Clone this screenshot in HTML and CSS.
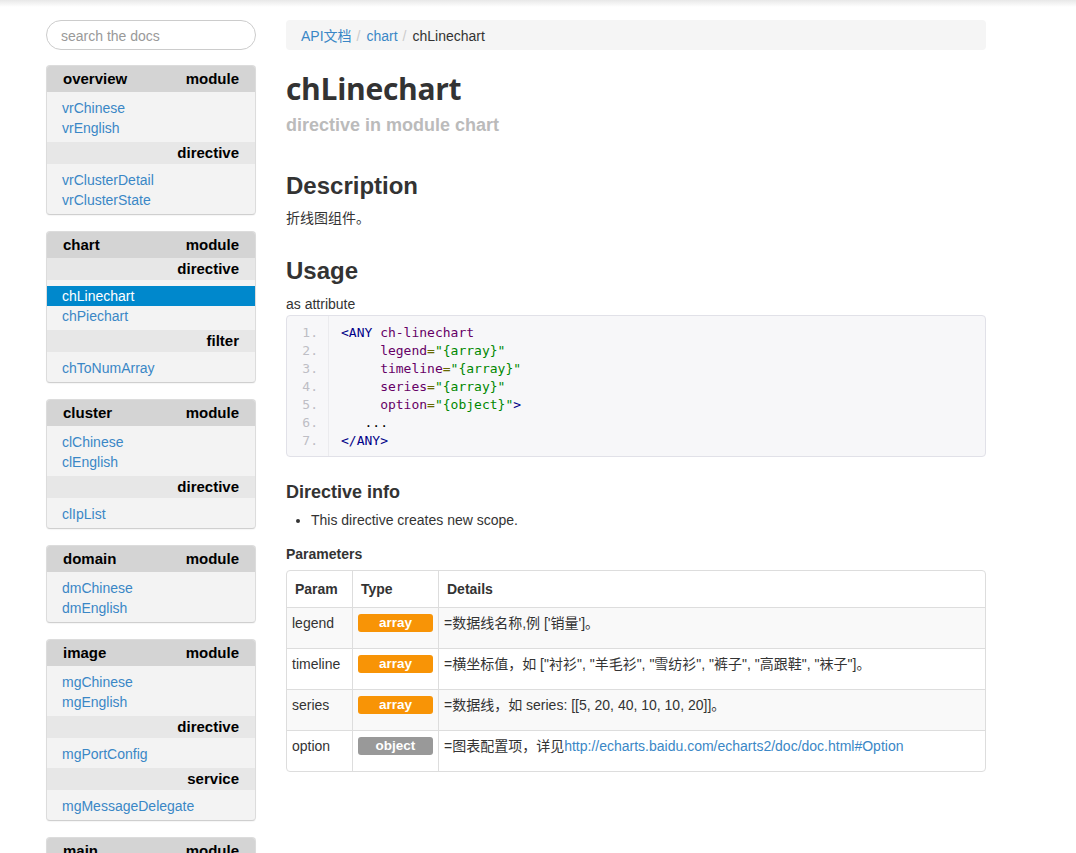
FILE: index.html
```html
<!DOCTYPE html>
<html lang="zh">
<head>
<meta charset="utf-8">
<title>chLinechart</title>
<link rel="stylesheet" href="styles.css">
</head>
<body>
<div class="page">
  <aside class="sidebar">
    <input class="search" type="text" placeholder="search the docs">

    <div class="navbox">
      <div class="nav-head"><span>overview</span><span>module</span></div>
      <ul class="nav-list">
        <li><a href="#">vrChinese</a></li>
        <li><a href="#">vrEnglish</a></li>
      </ul>
      <div class="nav-sub">directive</div>
      <ul class="nav-list">
        <li><a href="#">vrClusterDetail</a></li>
        <li><a href="#">vrClusterState</a></li>
      </ul>
    </div>

    <div class="navbox">
      <div class="nav-head"><span>chart</span><span>module</span></div>
      <div class="nav-sub">directive</div>
      <ul class="nav-list">
        <li><a href="#" class="active">chLinechart</a></li>
        <li><a href="#">chPiechart</a></li>
      </ul>
      <div class="nav-sub">filter</div>
      <ul class="nav-list">
        <li><a href="#">chToNumArray</a></li>
      </ul>
    </div>

    <div class="navbox">
      <div class="nav-head"><span>cluster</span><span>module</span></div>
      <ul class="nav-list">
        <li><a href="#">clChinese</a></li>
        <li><a href="#">clEnglish</a></li>
      </ul>
      <div class="nav-sub">directive</div>
      <ul class="nav-list">
        <li><a href="#">clIpList</a></li>
      </ul>
    </div>

    <div class="navbox">
      <div class="nav-head"><span>domain</span><span>module</span></div>
      <ul class="nav-list">
        <li><a href="#">dmChinese</a></li>
        <li><a href="#">dmEnglish</a></li>
      </ul>
    </div>

    <div class="navbox">
      <div class="nav-head"><span>image</span><span>module</span></div>
      <ul class="nav-list">
        <li><a href="#">mgChinese</a></li>
        <li><a href="#">mgEnglish</a></li>
      </ul>
      <div class="nav-sub">directive</div>
      <ul class="nav-list">
        <li><a href="#">mgPortConfig</a></li>
      </ul>
      <div class="nav-sub">service</div>
      <ul class="nav-list">
        <li><a href="#">mgMessageDelegate</a></li>
      </ul>
    </div>

    <div class="navbox">
      <div class="nav-head"><span>main</span><span>module</span></div>
      <ul class="nav-list">
        <li><a href="#">mnChinese</a></li>
        <li><a href="#">mnEnglish</a></li>
      </ul>
    </div>
  </aside>

  <main class="content">
    <ol class="breadcrumb">
      <li><a href="#">API文档</a></li>
      <li><a href="#">chart</a></li>
      <li class="current">chLinechart</li>
    </ol>

    <h1 class="title">chLinechart</h1>
    <div class="subtitle">directive in module chart</div>

    <h2 class="section-title first">Description</h2>
    <p class="text desc">折线图组件。</p>

    <h2 class="section-title">Usage</h2>
    <p class="text usage-as">as attribute</p>

    <div class="code">
      <div class="gutter">
        <div>1.</div><div>2.</div><div>3.</div><div>4.</div><div>5.</div><div>6.</div><div>7.</div>
      </div>
      <div class="lines">
        <div class="line"><span class="tag">&lt;ANY</span> <span class="atn">ch-linechart</span></div>
        <div class="line">     <span class="atn">legend</span><span class="pun">=</span><span class="atv">"{array}"</span></div>
        <div class="line">     <span class="atn">timeline</span><span class="pun">=</span><span class="atv">"{array}"</span></div>
        <div class="line">     <span class="atn">series</span><span class="pun">=</span><span class="atv">"{array}"</span></div>
        <div class="line">     <span class="atn">option</span><span class="pun">=</span><span class="atv">"{object}"</span><span class="tag">&gt;</span></div>
        <div class="line"><span class="pln">   ...</span></div>
        <div class="line"><span class="tag">&lt;/ANY&gt;</span></div>
      </div>
    </div>

    <h3 class="info-title">Directive info</h3>
    <ul class="info-list">
      <li>This directive creates new scope.</li>
    </ul>

    <h4 class="params-title">Parameters</h4>
    <table class="params">
      <colgroup>
        <col class="c-param">
        <col class="c-type">
        <col>
      </colgroup>
      <thead>
        <tr><th>Param</th><th>Type</th><th>Details</th></tr>
      </thead>
      <tbody>
        <tr>
          <td>legend</td>
          <td><span class="badge">array</span></td>
          <td><p>=数据线名称,例 ['销量']。</p></td>
        </tr>
        <tr>
          <td>timeline</td>
          <td><span class="badge">array</span></td>
          <td><p>=横坐标值，如 ["衬衫", "羊毛衫", "雪纺衫", "裤子", "高跟鞋", "袜子"]。</p></td>
        </tr>
        <tr>
          <td>series</td>
          <td><span class="badge">array</span></td>
          <td><p>=数据线，如 series: [[5, 20, 40, 10, 10, 20]]。</p></td>
        </tr>
        <tr>
          <td>option</td>
          <td><span class="badge gray">object</span></td>
          <td><p>=图表配置项，详见<a href="#">http://echarts.baidu.com/echarts2/doc/doc.html#Option</a></p></td>
        </tr>
      </tbody>
    </table>
  </main>
</div>
</body>
</html>
```
FILE: styles.css
```css
html {
  overflow: hidden;
}

body {
  margin: 0;
  font-family: "Liberation Sans", Arial, "Noto Sans CJK SC", sans-serif;
  font-size: 14px;
  line-height: 20px;
  color: #333;
  background: #fff linear-gradient(#e8e8e8, #ffffff 7px) no-repeat;
}

a {
  color: #428bca;
  text-decoration: none;
}

.page {
  display: flex;
  align-items: flex-start;
  gap: 30px;
  padding: 20px 0 0 46px;
}

/* ---------- sidebar ---------- */
.sidebar {
  width: 210px;
  flex: none;
}

.search {
  display: block;
  box-sizing: border-box;
  width: 210px;
  height: 30px;
  margin: 0 0 15px;
  padding: 1px 14px 0;
  border: 1px solid #ccc;
  border-radius: 15px;
  font-family: "Liberation Sans", Arial, sans-serif;
  font-size: 14px;
  color: #555;
  background: #fff;
  outline: none;
}

.search::placeholder {
  color: #999;
}

.navbox {
  border: 1px solid #dcdcdc;
  border-bottom-color: #cfcfcf;
  border-radius: 4px;
  background: #f3f3f3;
  overflow: hidden;
  margin-bottom: 16px;
  box-shadow: 0 1px 1px rgba(0, 0, 0, 0.04);
}

.navbox:nth-child(3) {
  margin-top: 2px;
}

.nav-head {
  display: flex;
  justify-content: space-between;
  height: 26px;
  line-height: 26px;
  padding: 0 16px;
  background: #d4d4d4;
  font-weight: bold;
  font-size: 15px;
  color: #000;
}

.nav-sub {
  height: 22px;
  line-height: 22px;
  padding: 0 16px;
  text-align: right;
  background: #e7e7e7;
  font-weight: bold;
  font-size: 15px;
  color: #000;
}

.nav-list {
  list-style: none;
  margin: 0;
  padding: 6px 0 4px;
}

.nav-list a {
  display: block;
  padding: 0 15px;
  line-height: 20px;
  color: #3a87c6;
}

.nav-list a.active {
  background: #0088cc;
  color: #fff;
}

/* ---------- content ---------- */
.content {
  width: 700px;
  flex: none;
}

.breadcrumb {
  display: flex;
  list-style: none;
  margin: 0;
  padding: 6px 15px 4px;
  height: 20px;
  background: #f5f5f5;
  border-radius: 4px;
}

.breadcrumb li + li::before {
  content: "/";
  color: #ccc;
  padding: 0 6px 0 5px;
}

.breadcrumb a {
  color: #3a87c6;
}

.breadcrumb .current {
  color: #333;
}

.title {
  margin: 21px 0 0;
  font-family: "Open Sans", "Liberation Sans", sans-serif;
  font-weight: 700;
  font-size: 30px;
  line-height: 36px;
  color: #333;
  letter-spacing: -0.3px;
}

.subtitle {
  margin-top: 8px;
  font-weight: bold;
  font-size: 18px;
  line-height: 20px;
  color: #bbb;
}

.section-title {
  margin: 28px 0 0;
  font-size: 24px;
  line-height: 30px;
  font-weight: bold;
  color: #333;
}

.section-title.first {
  margin-top: 36px;
}

.text {
  margin: 0;
}

.desc {
  margin-top: 7px;
}

.usage-as {
  margin-top: 8px;
}

.code {
  display: flex;
  margin-top: 1px;
  padding: 8px 0 6px;
  background: #f7f7f9;
  border: 1px solid #e1e1e8;
  border-radius: 4px;
  font-family: "DejaVu Sans Mono", "Liberation Mono", monospace;
  font-size: 13px;
  line-height: 18px;
}

.gutter {
  width: 31px;
  padding: 8px 10px 6px 0;
  margin: -8px 0 -6px;
  text-align: right;
  color: #bebec5;
  border-right: 1px solid #ebebee;
}

.lines {
  padding-left: 12px;
}

.line {
  white-space: pre;
  color: #000;
}

.tag { color: #000088; }
.atn { color: #660066; }
.pun { color: #666600; }
.atv { color: #008800; }
.pln { color: #000; }

.info-title {
  margin: 23px 0 0;
  font-size: 18px;
  line-height: 24px;
  font-weight: bold;
  color: #333;
}

.info-list {
  margin: 6px 0 0;
  padding-left: 25px;
}

.params-title {
  margin: 14px 0 0;
  font-size: 14px;
  line-height: 20px;
  font-weight: bold;
  color: #333;
}

.params {
  margin-top: 6px;
  width: 700px;
  table-layout: fixed;
  border-collapse: separate;
  border-spacing: 0;
  border: 1px solid #ddd;
  border-radius: 4px;
}

.c-param { width: 65px; }
.c-type { width: 86px; }

.params th,
.params td {
  text-align: left;
  vertical-align: top;
  line-height: 20px;
  border-left: 1px solid #ddd;
  border-top: 1px solid #ddd;
}

.params th {
  padding: 8px;
  font-weight: bold;
  border-top: 0;
}

.params td {
  padding: 5px;
}

.params th:first-child,
.params td:first-child {
  border-left: 0;
}

.params tbody tr:nth-child(odd) td {
  background: #f9f9f9;
}

.params td p {
  margin: 0 0 10px;
}

.params td a {
  color: #3a87c6;
}

.badge {
  display: block;
  width: 75px;
  height: 18px;
  margin-top: 1px;
  line-height: 18px;
  text-align: center;
  border-radius: 3px;
  background: #f89406;
  color: #fff;
  font-weight: bold;
  font-size: 13.5px;
}

.badge.gray {
  background: #999;
}
```
